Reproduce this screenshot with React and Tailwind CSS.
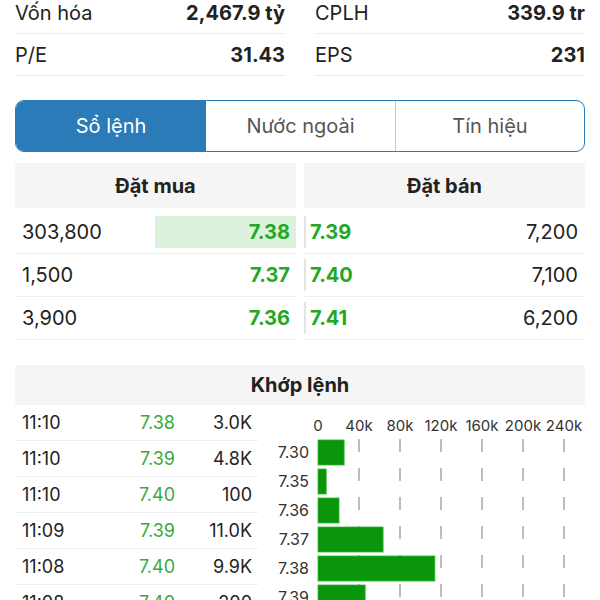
import React from 'react';

const stats = [
  [
    { label: 'Vốn hóa', value: '2,467.9 tỷ' },
    { label: 'P/E', value: '31.43' },
  ],
  [
    { label: 'CPLH', value: '339.9 tr' },
    { label: 'EPS', value: '231' },
  ],
];

const bids = [
  { vol: '303,800', price: '7.38', hl: true },
  { vol: '1,500', price: '7.37' },
  { vol: '3,900', price: '7.36' },
];

const asks = [
  { price: '7.39', vol: '7,200' },
  { price: '7.40', vol: '7,100' },
  { price: '7.41', vol: '6,200' },
];

const trades = [
  ['11:10', '7.38', '3.0K'],
  ['11:10', '7.39', '4.8K'],
  ['11:10', '7.40', '100'],
  ['11:09', '7.39', '11.0K'],
  ['11:08', '7.40', '9.9K'],
  ['11:08', '7.40', '200'],
];

const volumes = [
  { price: '7.30', k: 25.5 },
  { price: '7.35', k: 8 },
  { price: '7.36', k: 20.5 },
  { price: '7.37', k: 63.5 },
  { price: '7.38', k: 114 },
  { price: '7.39', k: 46 },
];

const ticks = ['0', '40k', '80k', '120k', '160k', '200k', '240k'];

// horizontal bar chart, 41px per 40k
const VolumeChart = () => {
  const x0 = 48;
  const step = 41;
  return (
    <svg width="320" height="195" viewBox="0 0 320 195">
      {ticks.map((t, i) => (
        <text key={t} x={x0 + i * step} y="26" textAnchor="middle" fontSize="15" fill="#333" fontFamily="Inter, sans-serif">
          {t}
        </text>
      ))}
      {ticks.slice(1).map((t, i) => (
        <line key={t} x1={x0 + (i + 1) * step} x2={x0 + (i + 1) * step} y1="34" y2="195" stroke="#a8a8a8" strokeWidth="1.5" strokeDasharray="13 16" />
      ))}
      {volumes.map((v, i) => {
        const top = 35 + i * 29;
        return (
          <g key={v.price}>
            <text x="39" y={top + 18} textAnchor="end" fontSize="16" fill="#333" fontFamily="Inter, sans-serif">
              {v.price}
            </text>
            <rect x={x0} y={top} width={(v.k / 40) * step} height="25" fill="#0a960a" stroke="#2fb82f" strokeWidth="0.8" />
          </g>
        );
      })}
    </svg>
  );
};

export default function App() {
  return (
    <div className="w-[600px] h-[600px] overflow-hidden bg-white text-[#222] font-['Inter',sans-serif]">
      {/* Stats */}
      <div className="grid grid-cols-2 gap-[30px] px-[15px] -mt-[8px]">
        {stats.map((col, ci) => (
          <div key={ci}>
            {col.map((s) => (
              <div key={s.label} className="h-[42px] flex items-center justify-between border-b border-[#ececec] text-[20px]">
                <span>{s.label}</span>
                <span className="font-bold">{s.value}</span>
              </div>
            ))}
          </div>
        ))}
      </div>

      {/* Tabs */}
      <div className="mx-[15px] mt-[24px] h-[52px] flex border-[1.5px] border-[#2b7bb9] rounded-[9px] overflow-hidden text-[20px]">
        <div className="w-[190px] flex items-center justify-center bg-[#2b7bb9] text-white">Sổ lệnh</div>
        <div className="w-[190px] flex items-center justify-center text-[#555] border-r border-[#c8c8c8]">Nước ngoài</div>
        <div className="flex-1 flex items-center justify-center text-[#555]">Tín hiệu</div>
      </div>

      {/* Order book */}
      <div className="grid grid-cols-2 gap-[8px] px-[15px] mt-[11px]">
        <div>
          <div className="h-[45px] mb-[3px] flex items-center justify-center bg-[#f5f5f5] font-bold text-[20px]">Đặt mua</div>
          {bids.map((b) => (
            <div key={b.price} className="h-[43px] flex items-center justify-between border-b border-[#eeeeee] text-[20px]">
              <span className="pl-[7px]">{b.vol}</span>
              <span className={`h-[32px] w-[141px] flex items-center justify-end pr-[6px] font-bold text-[#23a823] ${b.hl ? 'bg-[#dcf2dc]' : ''}`}>
                {b.price}
              </span>
            </div>
          ))}
        </div>
        <div>
          <div className="h-[45px] mb-[3px] flex items-center justify-center bg-[#f5f5f5] font-bold text-[20px]">Đặt bán</div>
          {asks.map((a) => (
            <div key={a.price} className="h-[43px] flex items-center justify-between border-b border-[#eeeeee] text-[20px]">
              <span className="h-[32px] flex items-center pl-[4px] border-l-2 border-[#e4e4e4] font-bold text-[#23a823]">{a.price}</span>
              <span className="pr-[7px]">{a.vol}</span>
            </div>
          ))}
        </div>
      </div>

      {/* Matched orders */}
      <div className="mx-[15px] mt-[25px] h-[40px] flex items-center justify-center bg-[#f5f5f5] font-bold text-[20px]">Khớp lệnh</div>
      <div className="flex px-[15px]">
        <div className="w-[243px] shrink-0">
          {trades.map((t, i) => (
            <div key={i} className="h-[36px] flex items-center border-b border-[#eeeeee] text-[18px]">
              <span className="pl-[7px] w-[100px]">{t[0]}</span>
              <span className="w-[60px] text-right text-[#3aaa3a]">{t[1]}</span>
              <span className="flex-1 text-right pr-[6px]">{t[2]}</span>
            </div>
          ))}
        </div>
        <div className="ml-[12px] shrink-0">
          <VolumeChart />
        </div>
      </div>
    </div>
  );
}
